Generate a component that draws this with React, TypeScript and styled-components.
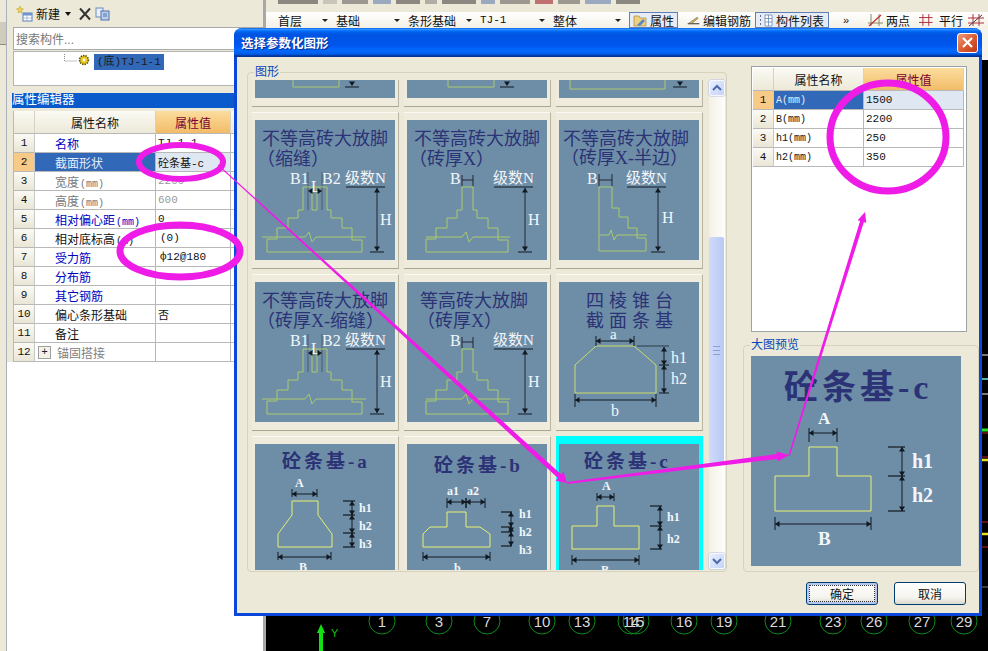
import React from 'react';
import styled, { createGlobalStyle } from 'styled-components';

const UI = '"Liberation Sans","Noto Sans CJK SC",sans-serif';
const MONO = '"Liberation Mono","Noto Sans CJK SC",monospace';
const SERIF = '"Liberation Serif","Noto Sans CJK SC",serif';

const Global = createGlobalStyle`
  html, body { margin: 0; padding: 0; background: #ECE9D8; }
  #root { width: 988px; height: 651px; }
`;

const Page = styled.div`
  position: relative; width: 988px; height: 651px; overflow: hidden; display: flex;
  background: #ECE9D8; font-family: ${UI}; font-size: 12px; color: #111;
`;
const Rail = styled.div`
  width: 6px; flex: none; background: #ECE9D8; border-right: 1px solid #A9B0BC; padding-top: 22px; box-sizing: content-box;
`;
const RailButton = styled.div`
  height: 22px; background: #CFCCBC; border-bottom: 1px solid #8E8C80;
`;
const LeftPanel = styled.div`
  width: 250px; flex: none; display: flex; flex-direction: column; overflow: hidden;
  background: linear-gradient(180deg, #ECE9D8 0, #ECE9D8 362px, #fff 362px);
  border-right: 3px solid #A8A8A8; padding-left: 6px; box-sizing: content-box;
`;
const LeftTools = styled.div`
  height: 27px; flex: none; display: flex; align-items: center; padding-left: 3px; gap: 3px; font-size: 12px;
`;
const ToolLabel = styled.span`font-size: 12px;`;
const Caret = styled.i`
  width: 0; height: 0; border: 3px solid transparent; border-top: 4px solid #111; border-bottom: 0; margin: 0 4px 0 2px;
`;
const Search = styled.div`
  height: 23px; flex: none; box-sizing: border-box; border: 1px solid #A9A9A9; background: #fff; color: #777; display: flex;
  align-items: center; padding-left: 2px; font-size: 12px;
`;
const Tree = styled.div`
  height: 35px; flex: none; box-sizing: border-box; margin-top: 1px; background: #fff; border: 1px solid #B4B4B4; display: flex;
  align-items: flex-start; padding: 2px 0 0 50px;
`;
const TreeNode = styled.span`
  height: 16px; padding: 0 3px; background: #3168B8; color: #1b1b1b; font: 11px/16px ${MONO}; margin-left: 4px;
`;
const EditorTitle = styled.div`
  height: 15px; flex: none; margin: 7px 0 0 -1px; background: #0A5ACB; color: #fff; font-size: 12.5px; line-height: 15px;
`;
const PropTable = styled.div`
  margin: 3px 0 0 0; background: #fff; border-left: 1px solid #B8B8B8; display: grid;
  grid-template-columns: 21px 121px 75px 24px; grid-template-rows: 23px; grid-auto-rows: 19px; width: 241px;
`;
const HeadCell = styled.div<{ $active?: boolean }>`
  display: flex; align-items: center; justify-content: center; font-size: 12px;
  color: ${p => (p.$active ? '#7A0030' : '#111')};
  background: ${p => (p.$active ? 'linear-gradient(180deg,#FBDD9E,#F2BC68)' : 'linear-gradient(180deg,#FBFAF4,#ECE9D8)')};
  border-right: 1px solid #D5D2C3; border-bottom: 1px solid #B8B8B8; box-sizing: border-box;
`;
const IndexCell = styled.div<{ $active?: boolean }>`
  display: flex; align-items: center; justify-content: center; font: 11px ${MONO};
  background: ${p => (p.$active ? '#F8CA88' : 'linear-gradient(180deg,#FBFAF4,#E9E6D6)')};
  border-right: 1px solid #C8C8C8; border-bottom: 1px solid #B8B8B8; box-sizing: border-box;
`;
const NameCell = styled.div<{ $tone?: string; $active?: boolean; $pad?: number }>`
  display: flex; align-items: center; gap: 6px; white-space: nowrap; overflow: hidden;
  padding-left: ${p => p.$pad ?? 20}px; font-size: 12px;
  color: ${p => (p.$active ? '#E8EEF8' : p.$tone || '#111')};
  background: ${p => (p.$active ? '#3168B8' : '#fff')};
  border-right: 1px solid #B8B8B8; border-bottom: 1px solid #B8B8B8; box-sizing: border-box;
`;
const ValueCell = styled.div<{ $tone?: string; $active?: boolean; $pad?: number }>`
  display: flex; align-items: center; white-space: nowrap; overflow: hidden;
  padding-left: ${p => p.$pad ?? 2}px; font: 11px ${MONO};
  color: ${p => p.$tone || '#111'};
  background: ${p => (p.$active ? '#DFE7F3' : '#fff')};
  border-right: 1px solid #B8B8B8; border-bottom: 1px solid #B8B8B8; box-sizing: border-box;
`;
const Unit = styled.span`font: 10px ${MONO}; margin-left: 1px;`;
const MonoName = styled.span`font: 10px ${MONO};`;
const Expander = styled.i`
  width: 11px; height: 11px; flex: none; border: 1px solid #A0A0A0; background: #F4F2E8; color: #222;
  font: 11px/11px ${MONO}; text-align: center; font-style: normal;
`;

const Workspace = styled.div`flex: 1; display: flex; flex-direction: column; min-width: 0;`;
const ClippedRow = styled.div`
  height: 12px; flex: none; display: flex; gap: 5px; padding-left: 12px; overflow: hidden; align-items: flex-start;
`;
const ClipMark = styled.i<{ $w: number; $c: string }>`
  width: ${p => p.$w}px; height: 4px; background: ${p => p.$c}; flex: none;
`;
const ToolRow = styled.div`
  height: 16px; flex: none; display: flex; align-items: center; padding-left: 12px; white-space: nowrap;
  background: linear-gradient(180deg,#FFFFFF,#F3F1E6); overflow: hidden; font-size: 12px;
`;
const Combo = styled.div<{ $w: number }>`
  width: ${p => p.$w}px; flex: none; display: flex; justify-content: space-between; align-items: center; padding-right: 8px;
  box-sizing: border-box; font-size: 12px;
`;
const ComboMono = styled.span`font: 11px ${MONO};`;
const ComboCaret = styled.i`
  width: 0; height: 0; border: 3px solid transparent; border-top: 3px solid #222; border-bottom: 0;
`;
const ToolBtn = styled.div<{ $w: number; $on?: boolean; $gap?: number }>`
  width: ${p => p.$w}px; height: 16px; flex: none; display: flex; align-items: center; gap: 3px; padding-left: 3px;
  box-sizing: border-box; margin-right: ${p => p.$gap ?? 0}px;
  background: ${p => (p.$on ? '#E6ECF6' : 'transparent')};
  border: ${p => (p.$on ? '1px solid #5E7FB8' : '1px solid transparent')};
`;
const Chevron = styled.span`width: 21px; font-size: 11px; flex: none;`;
const Canvas = styled.div`flex: 1; background: #000; min-height: 0;`;
const CanvasArt = styled.svg`display: block; width: 100%; height: 100%;`;

const Dialog = styled.section`
  position: absolute; left: 234px; top: 28px; width: 748px; height: 588px; box-sizing: border-box;
  display: flex; flex-direction: column; background: #ECE9D8; border: 3px solid #0A46D8; border-top: 0;
  border-radius: 8px 8px 0 0;
`;
const TitleBar = styled.header`
  height: 29px; flex: none; margin: 0 -3px; display: flex; align-items: center; justify-content: space-between;
  padding: 0 4px 0 7px; border-radius: 8px 8px 0 0;
  background: linear-gradient(180deg,#0058EE 0%,#3593FF 4%,#288EFF 6%,#127DFF 8%,#036FFC 10%,#0262EE 14%,#0057E5 20%,#0054E3 24%,#0055EB 56%,#005BF5 66%,#026AFE 76%,#0062EF 86%,#0052D6 92%,#0040AB 94%,#003092 100%);
`;
const TitleText = styled.h1`
  margin: 0; font: 700 12.5px ${UI}; color: #fff; text-shadow: 1px 1px 1px #0A2A90;
`;
const CloseBtn = styled.button`
  width: 21px; height: 20px; padding: 0; display: flex; align-items: center; justify-content: center;
  border: 1px solid #fff; border-radius: 3px; background: linear-gradient(135deg,#EE9A7C,#D85A32 55%,#BE3A18);
`;
const Columns = styled.div`display: flex; padding: 8px 0 0 10px; gap: 16px; align-items: flex-start;`;
const Group = styled.fieldset<{ $w: number; $h: number }>`
  margin: 0; padding: 0; width: ${p => p.$w}px; height: ${p => p.$h}px; box-sizing: border-box; min-width: 0;
  border: 1px solid #D6D2BE; border-radius: 4px; display: block;
`;
const Legend = styled.legend<{ $x: number }>`
  padding: 0 1px; margin-left: ${p => p.$x}px; font-size: 12px; line-height: 14px; color: #0A46B8;
`;
const ShapeArea = styled.div`display: flex; padding: 1px 1px 0 4px; gap: 6px; height: 490px;`;
const ShapeGrid = styled.div`
  display: grid; grid-template-columns: repeat(3, 147px); grid-template-rows: 27px 157px 157px 134px;
  gap: 5px; width: 451px; height: 490px; overflow: hidden; flex: none;
`;
const ShapeCell = styled.div<{ $selected?: boolean; $top?: boolean; $last?: boolean }>`
  box-sizing: border-box; overflow: hidden;
  padding: ${p => (p.$top ? 0 : p.$selected ? 8 : 7)}px 4px ${p => (p.$last ? 0 : 8)}px 3px;
  background: ${p => (p.$selected ? '#00FFFF' : '#EFEBDD')};
  border-top: ${p => (p.$top || p.$selected ? '0' : '1px solid #FAF9F3')};
  border-right: ${p => (p.$selected ? '0' : '1px solid #B8B5A2')};
  border-bottom: ${p => (p.$last ? '0' : '1px solid #A9A692')};
`;
const Thumb = styled.svg`display: block;`;
const TitleMark = styled.text<{ $size?: number; $sp?: number; $bold?: boolean }>`
  font-family: ${SERIF}; font-size: ${p => p.$size ?? 18}px; letter-spacing: ${p => p.$sp ?? 0}px;
  font-weight: ${p => (p.$bold ? 700 : 400)}; fill: #2B3275;
`;
const DimMark = styled.text<{ $size?: number; $bold?: boolean }>`
  font-family: ${SERIF}; font-size: ${p => p.$size ?? 16}px; fill: #F2F6FA;
  font-weight: ${p => (p.$bold ? 700 : 400)};
`;
const Scrollbar = styled.div`
  width: 16px; height: 489px; flex: none; display: flex; flex-direction: column; box-sizing: border-box;
  background: linear-gradient(90deg,#F3F1E6,#FDFDFB);
`;
const ScrollBtn = styled.div`
  width: 16px; height: 16px; flex: none; display: flex; align-items: center; justify-content: center; box-sizing: border-box;
  background: linear-gradient(135deg,#E8EEFD,#C5D3F8); border: 1px solid #F6F8FE; border-radius: 2px;
  box-shadow: 0 0 0 .5px #B4C0DE;
`;
const ScrollThumb = styled.div`
  width: 15px; height: 226px; margin-top: 141px; flex: none; display: flex; align-items: center; justify-content: center;
  background: linear-gradient(90deg,#D0DBFA,#B9C9F4); border-radius: 2px;
`;
const ScrollFill = styled.div`flex: 1;`;
const Grip = styled.i`
  width: 7px; height: 7px; border-top: 1px solid #8AA0D8; border-bottom: 1px solid #8AA0D8;
  background: linear-gradient(#8AA0D8,#8AA0D8) center/100% 1px no-repeat;
`;
const RightCol = styled.div`display: flex; flex-direction: column; width: 236px;`;
const ParamBox = styled.div`
  width: 216px; height: 266px; margin: 1px 0 6px 8px; box-sizing: border-box; background: #fff; border: 1px solid #9AA4A8;
  padding: 1px 2px 0 1px;
`;
const ParamGrid = styled.div`
  display: grid; grid-template-columns: 21px 90px 100px; grid-template-rows: 23px; grid-auto-rows: 19px;
`;
const PreviewArea = styled.div`padding: 4px 0 0 7px;`;
const Footer = styled.footer`
  display: flex; justify-content: flex-end; gap: 16px; padding: 10px 13px 0 0;
`;
const Button = styled.button<{ $primary?: boolean }>`
  width: 72px; height: 23px; padding: 0; border: 1px solid #003C74; border-radius: 3px; font: 12px ${UI}; color: #111;
  background: linear-gradient(180deg,#FFFFFF,#F4F3EE 70%,#DCD9CC);
  box-shadow: ${p => (p.$primary ? 'inset 0 0 0 2px #B4C8EE' : 'none')};
  outline: ${p => (p.$primary ? '1px dotted #333' : 'none')}; outline-offset: -4px;
`;
const Overlay = styled.svg`position: absolute; left: 0; top: 0; width: 988px; height: 651px; pointer-events: none;`;

const YELLOW = '#A9C96C';
const BRIGHT = '#E6F06E';
const DARK = '#101820';

const Poly = ({ p, c = YELLOW }: { p: string; c?: string }) => <polygon points={p} fill="none" stroke={c} strokeWidth={1} />;
const L = ({ a, b, c, d, s = DARK }: { a: number; b: number; c: number; d: number; s?: string }) => (
  <line x1={a} y1={b} x2={c} y2={d} stroke={s} strokeWidth={1} />
);
const Head = ({ x, y, dir, s = 3 }: { x: number; y: number; dir: 'u' | 'd' | 'l' | 'r'; s?: number }) => {
  const pts = {
    u: `${x},${y} ${x - s},${y + s * 1.5} ${x + s},${y + s * 1.5}`,
    d: `${x},${y} ${x - s},${y - s * 1.5} ${x + s},${y - s * 1.5}`,
    l: `${x},${y} ${x + s * 1.5},${y - s} ${x + s * 1.5},${y + s}`,
    r: `${x},${y} ${x - s * 1.5},${y - s} ${x - s * 1.5},${y + s}`,
  }[dir];
  return <polygon points={pts} fill={DARK} />;
};
const HDim = ({ x1, x2, y, t0, t1 }: { x1: number; x2: number; y: number; t0: number; t1: number }) => (
  <g>
    <L a={x1} b={t0} c={x1} d={t1} /><L a={x2} b={t0} c={x2} d={t1} /><L a={x1} b={y} c={x2} d={y} />
    <Head x={x1} y={y} dir="l" /><Head x={x2} y={y} dir="r" />
  </g>
);
const VRun = ({ x, ys }: { x: number; ys: number[] }) => (
  <g>
    <L a={x} b={ys[0]} c={x} d={ys[ys.length - 1]} />
    {ys.slice(0, -1).map((y, i) => (
      <g key={y}><Head x={x} y={y} dir="u" /><Head x={x} y={ys[i + 1]} dir="d" /></g>
    ))}
  </g>
);
const LevelDim = ({ x, lx, ly, labelX, labelY }: { x: number; lx: number; ly: number; labelX: number; labelY: number }) => (
  <g>
    <DimMark x={lx} y={ly} $size={15}>级数N</DimMark>
    <L a={lx + 1} b={67} c={lx + 40} d={67} />
    <L a={x} b={68} c={x} d={131} s="#223" />
    <Head x={x} y={68} dir="u" /><Head x={x} y={131} dir="d" />
    <L a={x - 7} b={132} c={x + 7} d={132} />
    <DimMark x={labelX} y={labelY} $size={16}>H</DimMark>
  </g>
);
const Ground = ({ x1, x2, b }: { x1: number; x2: number; b: number }) => (
  <polyline points={`${x1},117 ${b},117 ${b + 4},112 ${b + 7},122 ${b + 11},117 ${x2},117`} fill="none" stroke={YELLOW} />
);
const Stage = ({ h = 140, y = 0, w = 140, children }: { h?: number; y?: number; w?: number; children?: React.ReactNode }) => (
  <Thumb width={w} height={h} viewBox={`0 ${y} ${w} ${h}`}>
    <rect x={0} y={y} width={w} height={h} fill="#6E8EA8" />
    {children}
  </Thumb>
);

const Steps = ({ a, b }: { a: number; b: number }) => (
  <Poly p={`${a},67 ${a},90 ${a - 5},90 ${a - 5},98 ${a - 15},98 ${a - 15},108 ${a - 26},108 ${a - 26},119 ${a - 36},119 ${a - 36},132 ${b + 35},132 ${b + 35},120 ${b + 25},120 ${b + 25},108 ${b + 15},108 ${b + 15},98 ${b + 4},98 ${b + 4},90 ${b},90 ${b},67`} />
);
const SlotBrick = ({ line1, line2, x2 }: { line1: string; line2: string; x2: number }) => (
  <Stage>
    <TitleMark x={7} y={25}>{line1}</TitleMark>
    <TitleMark x={x2} y={45}>{line2}</TitleMark>
    <DimMark x={35} y={64}>B1</DimMark>
    <DimMark x={67} y={64}>B2</DimMark>
    <L a={53} b={52} c={53} d={90} s="#4A5A68" /><L a={67} b={52} c={67} d={90} s="#4A5A68" />
    <Steps a={48} b={72} />
    <polyline points="57,67 57,90 62,90 62,67" fill="none" stroke={YELLOW} />
    <Ground x1={7} x2={111} b={50} />
    <DimMark x={56} y={72}>L</DimMark>
    <Head x={53} y={71} dir="l" /><Head x={67} y={71} dir="r" />
    <LevelDim x={122} lx={90} ly={63} labelX={125} labelY={105} />
  </Stage>
);
const PlainBrick = ({ line1, x1, line2, x2 }: { line1: string; x1: number; line2: string; x2: number }) => (
  <Stage>
    <TitleMark x={x1} y={25}>{line1}</TitleMark>
    <TitleMark x={x2} y={45}>{line2}</TitleMark>
    <DimMark x={43} y={64}>B</DimMark>
    <L a={55} b={55} c={55} d={66} s="#223" /><L a={66} b={55} c={66} d={66} s="#223" /><L a={55} b={60} c={66} d={60} s="#223" />
    <Steps a={55} b={66} />
    <Ground x1={19} x2={103} b={55} />
    <LevelDim x={118} lx={86} ly={63} labelX={121} labelY={105} />
  </Stage>
);
const HalfBrick = () => (
  <Stage>
    <TitleMark x={4} y={25}>不等高砖大放脚</TitleMark>
    <TitleMark x={2} y={44}>（砖厚X-半边）</TitleMark>
    <DimMark x={28} y={64}>B</DimMark>
    <L a={40} b={54} c={40} d={66} s="#223" /><L a={53} b={54} c={53} d={66} s="#223" /><L a={40} b={60} c={53} d={60} s="#223" />
    <Poly p="40,67 53,67 53,88 60,88 60,97 69,97 69,108 78,108 78,118 87,118 87,131 40,131" />
    <polyline points="40,115 50,115 52,110 55,120 58,115 88,115" fill="none" stroke={YELLOW} />
    <LevelDim x={99} lx={67} ly={63} labelX={103} labelY={103} />
  </Stage>
);
const Pyramid = () => (
  <Stage>
    <TitleMark x={27} y={25} $sp={5}>四棱锥台</TitleMark>
    <TitleMark x={27} y={45} $sp={5}>截面条基</TitleMark>
    <Poly p="37,64 75,64 97,83 97,111 16,111 16,83" c="#C9DC6A" />
    <HDim x1={37} x2={75} y={59} t0={54} t1={64} />
    <DimMark x={51} y={57} $size={15}>a</DimMark>
    <L a={78} b={64} c={110} d={64} s="#2A3A48" /><L a={100} b={83} c={110} d={83} /><L a={100} b={111} c={110} d={111} />
    <VRun x={105} ys={[65, 83, 111]} />
    <DimMark x={112} y={81} $size={16}>h1</DimMark>
    <DimMark x={112} y={102} $size={16}>h2</DimMark>
    <HDim x1={16} x2={97} y={118} t0={112} t1={125} />
    <DimMark x={52} y={134} $size={16}>b</DimMark>
  </Stage>
);
const Sub = ({ x, y, t }: { x: number; y: number; t: string }) => <DimMark x={x} y={y} $size={12} $bold>{t}</DimMark>;
const Ticks = ({ x1, x2, ys }: { x1: number; x2: number; ys: number[] }) => (
  <g>{ys.map(y => <L key={y} a={x1} b={y} c={x2} d={y} s="#000" />)}</g>
);
const ConcreteA = () => (
  <Stage h={126}>
    <TitleMark x={27} y={24} $size={19} $sp={3} $bold>砼条基-a</TitleMark>
    <Sub x={40} y={43} t="A" />
    <HDim x1={37} x2={62} y={50} t0={45} t1={53} />
    <Poly p="37,57 63,57 63,71 77,90 77,103 23,103 23,90 37,71" c={BRIGHT} />
    <Ticks x1={88} x2={100} ys={[57, 71, 89, 103]} />
    <VRun x={97} ys={[57, 71, 89, 103]} />
    <Sub x={104} y={68} t="h1" /><Sub x={104} y={86} t="h2" /><Sub x={104} y={104} t="h3" />
    <HDim x1={23} x2={76} y={113} t0={108} t1={116} />
    <Sub x={44} y={127} t="B" />
  </Stage>
);
const ConcreteB = () => (
  <Stage h={126}>
    <TitleMark x={27} y={28} $size={19} $sp={3} $bold>砼条基-b</TitleMark>
    <Sub x={40} y={51} t="a1" /><Sub x={60} y={51} t="a2" />
    <HDim x1={40} x2={59} y={58} t0={54} t1={64} />
    <HDim x1={59} x2={78} y={58} t0={54} t1={64} />
    <Poly p="40,68 59,68 59,83 73,83 83,90 83,103 16,103 16,90 23,83 40,83" c={BRIGHT} />
    <Ticks x1={94} x2={105} ys={[68, 83, 88, 102]} />
    <VRun x={104} ys={[68, 83, 88, 102]} />
    <Sub x={112} y={74} t="h1" /><Sub x={112} y={92} t="h2" /><Sub x={112} y={110} t="h3" />
    <HDim x1={16} x2={83} y={113} t0={108} t1={117} />
    <Sub x={47} y={128} t="b" />
  </Stage>
);
const ConcreteC = () => (
  <Stage h={126}>
    <TitleMark x={25} y={24} $size={19} $sp={3} $bold>砼条基-c</TitleMark>
    <Sub x={43} y={46} t="A" />
    <HDim x1={38} x2={55} y={53} t0={49} t1={57} />
    <Poly p="38,62 55,62 55,82 80,82 80,105 13,105 13,82 38,82" c={BRIGHT} />
    <Ticks x1={91} x2={103} ys={[62, 82, 105]} />
    <VRun x={101} ys={[62, 82, 105]} />
    <Sub x={108} y={77} t="h1" /><Sub x={108} y={99} t="h2" />
    <HDim x1={13} x2={80} y={116} t0={111} t1={121} />
    <Sub x={42} y={130} t="B" />
  </Stage>
);
const TopA = () => (
  <Stage h={18} y={122}>
    <polyline points="38,120 38,129 84,129 84,120" fill="none" stroke={YELLOW} />
    <Head x={97} y={128} dir="d" /><L a={90} b={129} c={104} d={129} />
  </Stage>
);
const TopB = () => (
  <Stage h={18} y={122}>
    <polyline points="41,120 41,129 87,129 87,120" fill="none" stroke={YELLOW} />
    <Head x={100} y={128} dir="d" /><L a={93} b={129} c={107} d={129} />
  </Stage>
);
const TopC = () => (
  <Stage h={18} y={122}>
    <polyline points="11,120 11,131 106,131 106,120" fill="none" stroke={YELLOW} />
    <Head x={121} y={128} dir="d" /><L a={114} b={129} c={128} d={129} />
  </Stage>
);
const Preview = () => (
  <Thumb width={210} height={210} viewBox="0 0 210 210">
    <rect width={210} height={210} fill="#6E8EA8" />
    <TitleMark x={33} y={43} $size={34} $sp={4} $bold>砼条基-c</TitleMark>
    <DimMark x={67} y={68} $size={17} $bold>A</DimMark>
    <HDim x1={58} x2={86} y={77} t0={72} t1={86} />
    <Poly p="58,91 86,91 86,120 120,120 120,155 24,155 24,120 58,120" c={BRIGHT} />
    <Ticks x1={137} x2={154} ys={[91, 120, 155]} />
    <VRun x={151} ys={[91, 120, 155]} />
    <DimMark x={161} y={112} $size={20} $bold>h1</DimMark>
    <DimMark x={161} y={146} $size={20} $bold>h2</DimMark>
    <HDim x1={24} x2={120} y={168} t0={161} t1={174} />
    <DimMark x={67} y={189} $size={19} $bold>B</DimMark>
  </Thumb>
);

const leftRows = [
  { n: '1', name: '名称', tone: '#0000C0', value: 'TJ-1-1' },
  { n: '2', name: '截面形状', value: '砼条基-c', active: true },
  { n: '3', name: '宽度', unit: '(mm)', tone: '#777', value: '2200', vt: '#999' },
  { n: '4', name: '高度', unit: '(mm)', tone: '#777', value: '600', vt: '#999' },
  { n: '5', name: '相对偏心距', unit: '(mm)', tone: '#0000C0', value: '0' },
  { n: '6', name: '相对底标高', unit: '(m)', value: '(0)', pad: 4 },
  { n: '7', name: '受力筋', tone: '#0000C0', value: 'ф12@180', pad: 4 },
  { n: '8', name: '分布筋', tone: '#0000C0', value: '' },
  { n: '9', name: '其它钢筋', tone: '#0000C0', value: '' },
  { n: '10', name: '偏心条形基础', value: '否' },
  { n: '11', name: '备注', value: '' },
  { n: '12', name: '锚固搭接', tone: '#808080', value: '', expand: true },
];
const params = [
  { n: '1', name: 'A', value: '1500', active: true },
  { n: '2', name: 'B', value: '2200' },
  { n: '3', name: 'h1', value: '250' },
  { n: '4', name: 'h2', value: '350' },
];
const marks = [[40, '#8A8880'], [14, '#C8C6BA'], [26, '#9A9890'], [18, '#9AA8C0'], [24, '#8A8880'], [12, '#B0AEA4'], [34, '#8A8880'], [14, '#9AA8C0'], [30, '#9A9890'], [18, '#C07070'], [22, '#9A9890'], [26, '#9AA8C0'], [24, '#8A8880']] as [number, string][];
const axes = [[382, '1'], [439, '3'], [487, '7'], [542, '10'], [582, '13'], [631, '14'], [636, '15'], [684, '16'], [724, '19'], [778, '21'], [833, '23'], [874, '26'], [922, '27'], [964, '29']] as [number, string][];

const NewIcon = () => (
  <svg width="17" height="17" viewBox="0 0 17 17">
    <path d="M4 1 5 3.5 7.5 4 5.5 5.5 6 8 4 6.8 2 8 2.5 5.5.5 4 3 3.5Z" fill="#F2D44E" stroke="#B89A20" strokeWidth=".5" />
    <rect x="7" y="8" width="9" height="8" fill="#fff" stroke="#5A7FB8" />
    <rect x="7" y="8" width="9" height="2.5" fill="#6C95D0" />
    <path d="M7 13h9M11 10v6" stroke="#8AA6CE" strokeWidth=".7" />
  </svg>
);
const DeleteIcon = () => (
  <svg width="14" height="14" viewBox="0 0 14 14"><path d="M2 1.5 12 12.5M12 1.5 2 12.5" stroke="#333" strokeWidth="2" /></svg>
);
const CopyIcon = () => (
  <svg width="15" height="14" viewBox="0 0 15 14">
    <rect x="1" y="1" width="7" height="9" fill="#E8F0FA" stroke="#6C8CBC" />
    <rect x="6" y="4" width="8" height="9" fill="#BCD0EC" stroke="#4C70AC" />
    <path d="M8 7h4M8 9h4" stroke="#4C70AC" />
  </svg>
);
const GearIcon = () => (
  <svg width="12" height="12" viewBox="0 0 12 12">
    <circle cx="6" cy="6" r="4.4" fill="#E8C820" stroke="#554A00" strokeDasharray="1.4 1" strokeWidth="1.6" />
    <circle cx="6" cy="6" r="1.4" fill="#fff" />
  </svg>
);
const PropsIcon = () => (
  <svg width="14" height="13" viewBox="0 0 14 13">
    <path d="M1 2h5l1 2h6v8H1Z" fill="#F0D080" stroke="#A88A40" strokeWidth=".7" />
    <path d="M4 11 10 5l2 2-5 5Z" fill="#5A88C0" />
  </svg>
);
const RebarIcon = () => (
  <svg width="18" height="13" viewBox="0 0 18 13">
    <path d="M1 11h16" stroke="#333" strokeWidth="1.4" /><path d="M3 10 14 2l1.5 1.5L6 11Z" fill="#D4B050" stroke="#444" strokeWidth=".6" />
  </svg>
);
const ListIcon = () => (
  <svg width="14" height="13" viewBox="0 0 14 13">
    <path d="M1 2h2M1 6h2M1 10h2" stroke="#446" strokeWidth="1.4" strokeDasharray="1 1" />
    <path d="M6 1h7v11H6ZM6 4.5h7M6 8h7M9.5 1v11" fill="#fff" stroke="#6A88B0" strokeWidth=".8" />
  </svg>
);
const TwoPointIcon = () => (
  <svg width="15" height="14" viewBox="0 0 15 14">
    <path d="M3 1v12M11 1v12M0 10h15" stroke="#886" strokeWidth="1" /><path d="M1 13 13 2" stroke="#C03030" strokeWidth="1.2" />
  </svg>
);
const ParallelIcon = () => (
  <svg width="14" height="14" viewBox="0 0 14 14"><path d="M4 1v12M10 1v12M0 4.5h14M0 9.5h14" stroke="#B03040" strokeWidth="1" /></svg>
);
const SkewIcon = () => (
  <svg width="16" height="14" viewBox="0 0 16 14"><path d="M5 1v12M11 1v12M0 5h16M0 10h16" stroke="#B03040" /><path d="M1 13 14 2" stroke="#444" /></svg>
);

const tapered = (x1: number, y1: number, w1: number, x2: number, y2: number, w2: number, head: number, hw: number) => {
  const dx = x2 - x1, dy = y2 - y1, len = Math.hypot(dx, dy);
  const ux = dx / len, uy = dy / len, nx = -uy, ny = ux;
  const bx = x2 - ux * head, by = y2 - uy * head;
  const pt = (x: number, y: number) => `${x.toFixed(1)},${y.toFixed(1)}`;
  return [
    pt(x1 + nx * w1 / 2, y1 + ny * w1 / 2), pt(bx + nx * w2 / 2, by + ny * w2 / 2), pt(bx + nx * hw / 2, by + ny * hw / 2),
    pt(x2, y2), pt(bx - nx * hw / 2, by - ny * hw / 2), pt(bx - nx * w2 / 2, by - ny * w2 / 2), pt(x1 - nx * w1 / 2, y1 - ny * w1 / 2),
  ].join(' ');
};

export default function App() {
  const MAGENTA = '#EE1CE6';
  return (
    <Page>
      <Global />
      <Rail><RailButton /></Rail>
      <LeftPanel>
        <LeftTools>
          <NewIcon />
          <ToolLabel>新建</ToolLabel>
          <Caret />
          <DeleteIcon />
          <CopyIcon />
        </LeftTools>
        <Search>搜索构件...</Search>
        <Tree>
          <svg width="14" height="12" viewBox="0 0 14 12"><path d="M.5 0v7h13" stroke="#888" strokeDasharray="1 1" fill="none" /></svg>
          <GearIcon />
          <TreeNode>(底)TJ-1-1</TreeNode>
        </Tree>
        <EditorTitle>属性编辑器</EditorTitle>
        <PropTable>
          <HeadCell />
          <HeadCell>属性名称</HeadCell>
          <HeadCell $active>属性值</HeadCell>
          <HeadCell />
          {leftRows.map(r => (
            <React.Fragment key={r.n}>
              <IndexCell $active={r.active}>{r.n}</IndexCell>
              <NameCell $tone={r.tone} $active={r.active} $pad={r.expand ? 3 : 20}>
                {r.expand && <Expander>+</Expander>}
                <span>{r.name}{r.unit && <Unit>{r.unit}</Unit>}</span>
              </NameCell>
              <ValueCell $tone={r.vt} $active={r.active} $pad={r.pad}>{r.value}</ValueCell>
              <ValueCell />
            </React.Fragment>
          ))}
        </PropTable>
      </LeftPanel>
      <Workspace>
        <ClippedRow>
          {marks.map(([w, c], i) => <ClipMark key={i} $w={w} $c={c} />)}
        </ClippedRow>
        <ToolRow>
          <Combo $w={58}>首层<ComboCaret /></Combo>
          <Combo $w={72}>基础<ComboCaret /></Combo>
          <Combo $w={72}>条形基础<ComboCaret /></Combo>
          <Combo $w={73}><ComboMono>TJ-1</ComboMono><ComboCaret /></Combo>
          <Combo $w={76}>整体<ComboCaret /></Combo>
          <ToolBtn $w={49} $on $gap={5}><PropsIcon />属性</ToolBtn>
          <ToolBtn $w={69} $gap={3}><RebarIcon />编辑钢筋</ToolBtn>
          <ToolBtn $w={74} $on $gap={14}><ListIcon />构件列表</ToolBtn>
          <Chevron>»</Chevron>
          <ToolBtn $w={51}><TwoPointIcon />两点</ToolBtn>
          <ToolBtn $w={49}><ParallelIcon />&nbsp;平行</ToolBtn>
          <ToolBtn $w={30}><SkewIcon /></ToolBtn>
        </ToolRow>
        <Canvas>
          <CanvasArt viewBox="266 28 722 623" preserveAspectRatio="none">
            <rect x="975" y="28" width="13" height="32" fill="#F4F3EC" />
            {axes.map(([x, t]) => (
              <g key={t}>
                <circle cx={x} cy={621} r={13} fill="none" stroke="#0E8A1E" />
                <text x={x} y={627} textAnchor="middle" fill="#D8D8D8" fontFamily="Liberation Sans" fontSize={15}>{t}</text>
              </g>
            ))}
            <path d="M321 624 325 633H323V651H319V633H317Z" fill="#12E012" />
            <text x={331} y={637} fill="#12C012" fontFamily="Liberation Sans" fontSize={11}>Y</text>
            <path d="M982 355h6M982 394h6" stroke="#eee" />
            <path d="M982 379h6" stroke="#5AA" strokeWidth="2" />
            <path d="M982 430h6" stroke="#20E020" strokeWidth="3" />
            <path d="M982 433h6M982 457h6M982 522h6M982 547h6" stroke="#C02020" />
            <path d="M982 460h6M982 534h6" stroke="#E8E020" strokeWidth="2.4" />
            <path d="M982 587h6" stroke="#777" />
          </CanvasArt>
        </Canvas>
      </Workspace>

      <Dialog>
        <TitleBar>
          <TitleText>选择参数化图形</TitleText>
          <CloseBtn aria-label="关闭">
            <svg width="13" height="13" viewBox="0 0 13 13"><path d="M2 2 11 11M11 2 2 11" stroke="#fff" strokeWidth="2.2" /></svg>
          </CloseBtn>
        </TitleBar>
        <Columns>
          <Group $w={480} $h={507}>
            <Legend $x={6}>图形</Legend>
            <ShapeArea>
              <ShapeGrid>
                <ShapeCell $top><TopA /></ShapeCell>
                <ShapeCell $top><TopB /></ShapeCell>
                <ShapeCell $top><TopC /></ShapeCell>
                <ShapeCell><SlotBrick line1="不等高砖大放脚" line2="（缩缝）" x2={2} /></ShapeCell>
                <ShapeCell><PlainBrick line1="不等高砖大放脚" x1={7} line2="（砖厚X）" x2={2} /></ShapeCell>
                <ShapeCell><HalfBrick /></ShapeCell>
                <ShapeCell><SlotBrick line1="不等高砖大放脚" line2="（砖厚X-缩缝）" x2={2} /></ShapeCell>
                <ShapeCell><PlainBrick line1="等高砖大放脚" x1={13} line2="（砖厚X）" x2={10} /></ShapeCell>
                <ShapeCell><Pyramid /></ShapeCell>
                <ShapeCell $last><ConcreteA /></ShapeCell>
                <ShapeCell $last><ConcreteB /></ShapeCell>
                <ShapeCell $last $selected><ConcreteC /></ShapeCell>
              </ShapeGrid>
              <Scrollbar>
                <ScrollBtn>
                  <svg width="10" height="8" viewBox="0 0 10 8"><path d="M1 6 5 2l4 4" fill="none" stroke="#4D6AA8" strokeWidth="2" /></svg>
                </ScrollBtn>
                <ScrollThumb><Grip /></ScrollThumb>
                <ScrollFill />
                <ScrollBtn>
                  <svg width="10" height="8" viewBox="0 0 10 8"><path d="M1 2l4 4 4-4" fill="none" stroke="#4D6AA8" strokeWidth="2" /></svg>
                </ScrollBtn>
              </Scrollbar>
            </ShapeArea>
          </Group>
          <RightCol>
            <ParamBox>
              <ParamGrid>
                <HeadCell />
                <HeadCell>属性名称</HeadCell>
                <HeadCell $active>属性值</HeadCell>
                {params.map(r => (
                  <React.Fragment key={r.n}>
                    <IndexCell $active={r.active}>{r.n}</IndexCell>
                    <NameCell $active={r.active} $pad={2}><MonoName>{r.name}(mm)</MonoName></NameCell>
                    <ValueCell $active={r.active}>{r.value}</ValueCell>
                  </React.Fragment>
                ))}
              </ParamGrid>
            </ParamBox>
            <Group $w={236} $h={234}>
              <Legend $x={6}>大图预览</Legend>
              <PreviewArea><Preview /></PreviewArea>
            </Group>
          </RightCol>
        </Columns>
        <Footer>
          <Button $primary>确定</Button>
          <Button>取消</Button>
        </Footer>
      </Dialog>

      <Overlay viewBox="0 0 988 651">
        <ellipse cx={181} cy={162} rx={42} ry={17} fill="none" stroke={MAGENTA} strokeWidth={6} />
        <ellipse cx={180} cy={251} rx={60} ry={26} fill="none" stroke={MAGENTA} strokeWidth={7} />
        <ellipse cx={888} cy={137} rx={58} ry={54} fill="none" stroke={MAGENTA} strokeWidth={7} />
        <polygon points={tapered(218, 165, 1, 567, 483, 5, 10, 12)} fill={MAGENTA} />
        <polygon points={tapered(567, 483, 2, 789, 455, 5, 12, 10)} fill={MAGENTA} />
        <polygon points={tapered(789, 456, 1.5, 865, 212, 4, 10, 9)} fill={MAGENTA} />
      </Overlay>
    </Page>
  );
}
